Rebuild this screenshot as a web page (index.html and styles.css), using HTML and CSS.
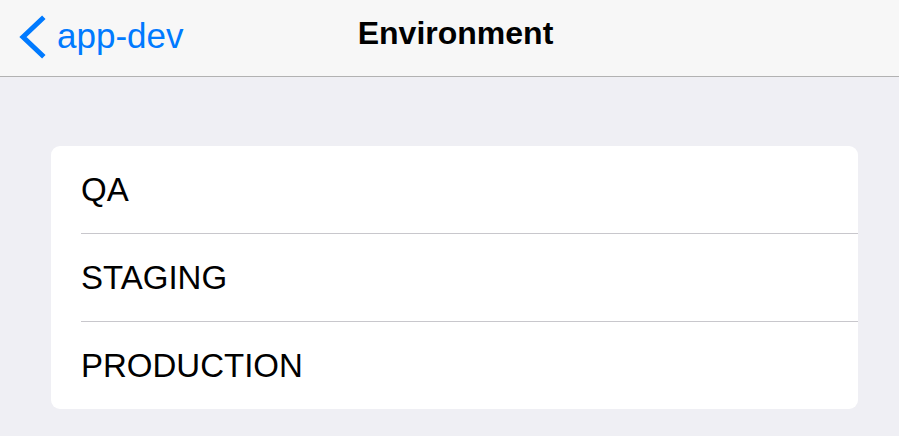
FILE: index.html
```html
<!DOCTYPE html>
<html lang="en">
<head>
<meta charset="utf-8">
<title>Environment</title>
<link rel="stylesheet" href="styles.css">
</head>
<body>
<header class="navbar">
  <a class="back" href="#">
    <svg class="chevron" width="31" height="44" viewBox="0 0 31 44" aria-hidden="true">
      <polyline points="27,4 8,22 27,40" fill="none" stroke="#007aff" stroke-width="5" stroke-linecap="square" stroke-linejoin="miter"/>
    </svg>
    <span class="back-label">app-dev</span>
  </a>
  <h1 class="title">Environment</h1>
  <div class="spacer"></div>
</header>
<main class="content">
  <ul class="list">
    <li class="row">QA</li>
    <li class="row">STAGING</li>
    <li class="row">PRODUCTION</li>
  </ul>
</main>
</body>
</html>
```
FILE: styles.css
```css
* { box-sizing: border-box; }
html, body { margin: 0; padding: 0; }
body {
  background: #efeff4;
  font-family: "Liberation Sans", Arial, sans-serif;
  color: #000;
  width: 899px;
  height: 436px;
  overflow: hidden;
}
.navbar {
  height: 77px;
  background: #f7f7f7;
  border-bottom: 1px solid #b2b2b2;
  display: grid;
  grid-template-columns: 1fr auto 1fr;
  align-items: center;
}
.back {
  display: flex;
  align-items: center;
  text-decoration: none;
  color: #007aff;
  padding-left: 15px;
  padding-bottom: 4px;
}
.chevron { display: block; margin-top: 2px; }
.back-label {
  font-size: 35px;
  margin-left: 11px;
}
.title {
  margin: 0;
  font-size: 32px;
  font-weight: bold;
  padding-left: 12px;
  padding-bottom: 10px;
}
.content {
  padding: 69px 41px 0 51px;
}
.list {
  list-style: none;
  margin: 0;
  padding: 0;
  background: #fff;
  border-radius: 9px;
  overflow: hidden;
}
.row {
  margin-left: 30px;
  height: 88px;
  display: flex;
  align-items: center;
  font-size: 33px;
  border-bottom: 1px solid #c8c7cc;
  padding-top: 1px;
}
.row:last-child {
  border-bottom: none;
  height: 87px;
}
```
